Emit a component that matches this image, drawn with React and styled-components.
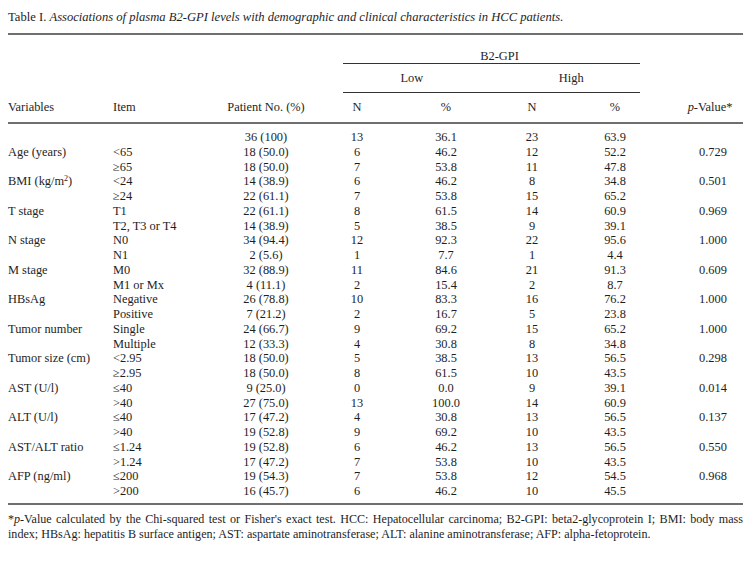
import React from "react";
import styled, { createGlobalStyle } from "styled-components";

const GlobalStyle = createGlobalStyle`
  body {
    margin: 0;
    background: #ffffff;
  }
`;

// column widths: Variables, Item, Patient, Low N, Low %, High N, High %, p-Value
const COLS = "105px 108px 90px 92px 86px 86px 80px 88px";

const rows = [
  ["", "", "36 (100)", "13", "36.1", "23", "63.9", ""],
  ["Age (years)", "<65", "18 (50.0)", "6", "46.2", "12", "52.2", "0.729"],
  ["", "≥65", "18 (50.0)", "7", "53.8", "11", "47.8", ""],
  ["BMI", "<24", "14 (38.9)", "6", "46.2", "8", "34.8", "0.501"],
  ["", "≥24", "22 (61.1)", "7", "53.8", "15", "65.2", ""],
  ["T stage", "T1", "22 (61.1)", "8", "61.5", "14", "60.9", "0.969"],
  ["", "T2, T3 or T4", "14 (38.9)", "5", "38.5", "9", "39.1", ""],
  ["N stage", "N0", "34 (94.4)", "12", "92.3", "22", "95.6", "1.000"],
  ["", "N1", "2 (5.6)", "1", "7.7", "1", "4.4", ""],
  ["M stage", "M0", "32 (88.9)", "11", "84.6", "21", "91.3", "0.609"],
  ["", "M1 or Mx", "4 (11.1)", "2", "15.4", "2", "8.7", ""],
  ["HBsAg", "Negative", "26 (78.8)", "10", "83.3", "16", "76.2", "1.000"],
  ["", "Positive", "7 (21.2)", "2", "16.7", "5", "23.8", ""],
  ["Tumor number", "Single", "24 (66.7)", "9", "69.2", "15", "65.2", "1.000"],
  ["", "Multiple", "12 (33.3)", "4", "30.8", "8", "34.8", ""],
  ["Tumor size (cm)", "<2.95", "18 (50.0)", "5", "38.5", "13", "56.5", "0.298"],
  ["", "≥2.95", "18 (50.0)", "8", "61.5", "10", "43.5", ""],
  ["AST (U/l)", "≤40", "9 (25.0)", "0", "0.0", "9", "39.1", "0.014"],
  ["", ">40", "27 (75.0)", "13", "100.0", "14", "60.9", ""],
  ["ALT (U/l)", "≤40", "17 (47.2)", "4", "30.8", "13", "56.5", "0.137"],
  ["", ">40", "19 (52.8)", "9", "69.2", "10", "43.5", ""],
  ["AST/ALT ratio", "≤1.24", "19 (52.8)", "6", "46.2", "13", "56.5", "0.550"],
  ["", ">1.24", "17 (47.2)", "7", "53.8", "10", "43.5", ""],
  ["AFP (ng/ml)", "≤200", "19 (54.3)", "7", "53.8", "12", "54.5", "0.968"],
  ["", ">200", "16 (45.7)", "6", "46.2", "10", "45.5", ""],
];

const App = () => {
  return (
    <>
      <GlobalStyle />
      <Page>
        <Caption>
          Table I. <em>Associations of plasma B2-GPI levels with demographic and clinical characteristics in HCC patients.</em>
        </Caption>

        <GroupRow $top={14}>
          <GroupCell $bottom={0}>
            <GroupLabel $shift={16}>B2-GPI</GroupLabel>
          </GroupCell>
        </GroupRow>

        <GroupRow $top={7}>
          <GroupCell $bottom={7}>
            <GroupLabel $shift={-10}>Low</GroupLabel>
            <GroupLabel $shift={12}>High</GroupLabel>
          </GroupCell>
        </GroupRow>

        <HeadRow>
          <Cell>Variables</Cell>
          <Cell>Item</Cell>
          <Cell $center>Patient No. (%)</Cell>
          <Cell $center>N</Cell>
          <Cell $center>%</Cell>
          <Cell $center>N</Cell>
          <Cell $center>%</Cell>
          <Cell $center $pad={22}>
            <i>p</i>-Value*
          </Cell>
        </HeadRow>

        <Body>
          {rows.map((r, i) => (
            <DataRow key={i}>
              <Cell>
                {r[0] === "BMI" ? (
                  <>
                    BMI (kg/m<Sup>2</Sup>)
                  </>
                ) : (
                  r[0]
                )}
              </Cell>
              <Cell>{r[1]}</Cell>
              <Cell $center>{r[2]}</Cell>
              <Cell $center>{r[3]}</Cell>
              <Cell $center>{r[4]}</Cell>
              <Cell $center>{r[5]}</Cell>
              <Cell $center>{r[6]}</Cell>
              <Cell $center $pad={28}>{r[7]}</Cell>
            </DataRow>
          ))}
        </Body>

        <Footnote>
          *<i>p</i>-Value calculated by the Chi-squared test or Fisher's exact test. HCC: Hepatocellular
          carcinoma; B2-GPI: beta2-glycoprotein I; BMI: body mass index; HBsAg: hepatitis B surface
          antigen; AST: aspartate aminotransferase; ALT: alanine aminotransferase; AFP: alpha-fetoprotein.
        </Footnote>
      </Page>
    </>
  );
};

const Page = styled.div`
  width: 735px;
  padding: 8px 13px 0 8px;
  font-family: "Liberation Serif", "Times New Roman", serif;
  font-size: 12.4px;
  color: #1e1e1e;
`;

const Caption = styled.div`
  font-size: 12.6px;
  line-height: 14px;
  padding-top: 2px;
  padding-bottom: 9px;
  border-bottom: 2px solid #6f6f6f;
  white-space: nowrap;

  em {
    font-style: italic;
  }
`;

const GroupRow = styled.div`
  display: grid;
  grid-template-columns: ${COLS};
  line-height: 14px;
  padding-top: ${(props) => props.$top}px;
`;

const GroupCell = styled.div`
  grid-column: 4 / 8;
  margin: 0 15px 0 32px;
  display: flex;
  padding-bottom: ${(props) => props.$bottom}px;
  border-bottom: 1px solid #333333;
`;

const GroupLabel = styled.span`
  flex: 1;
  text-align: center;
  padding-left: ${(props) => (props.$shift > 0 ? props.$shift : 0)}px;
  padding-right: ${(props) => (props.$shift < 0 ? -props.$shift : 0)}px;
`;

const HeadRow = styled.div`
  display: grid;
  grid-template-columns: ${COLS};
  line-height: 14px;
  padding: 7px 0 8px;
  border-bottom: 2px solid #6f6f6f;
`;

const Body = styled.div`
  padding: 6px 0 4px;
  border-bottom: 2px solid #6f6f6f;
`;

const DataRow = styled.div`
  display: grid;
  grid-template-columns: ${COLS};
  line-height: 14.75px;
  height: 14.75px;
`;

const Cell = styled.div`
  text-align: ${(props) => (props.$center ? "center" : "left")};
  padding-left: ${(props) => props.$pad || 0}px;
  white-space: nowrap;
`;

const Sup = styled.sup`
  font-size: 8px;
  line-height: 0;
  vertical-align: 4px;
`;

const Footnote = styled.p`
  margin: 7.5px 0 0;
  font-size: 12.1px;
  line-height: 15px;
  text-align: justify;
`;

export default App;
